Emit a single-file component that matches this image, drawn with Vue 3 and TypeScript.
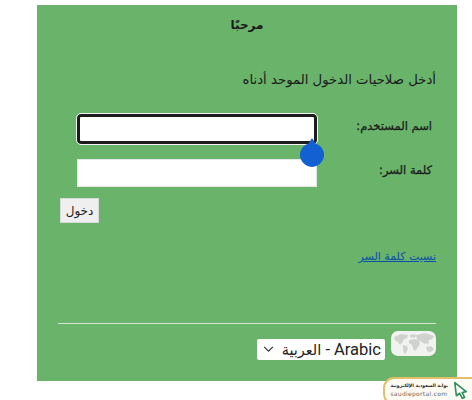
<script setup lang="ts">
const title = 'مرحبًا'
const intro = 'أدخل صلاحيات الدخول الموحد أدناه'
const fields = [
  { label: 'اسم المستخدم:', cls: 'focused' },
  { label: 'كلمة السر:', cls: 'plain' },
]
</script>

<template>
  <div class="page">
    <main class="panel" dir="rtl">
      <h1 class="title">{{ title }}</h1>
      <p class="intro">{{ intro }}</p>
      <form class="form" @submit.prevent>
        <div v-for="f in fields" :key="f.label" class="row" :class="f.cls">
          <label class="label">{{ f.label }}</label>
          <div class="box"></div>
        </div>
        <svg class="drop" viewBox="0 0 24 29" width="24" height="29">
          <path fill="#1260d2" d="M12 0l3.5 5.4A12 12 0 1 1 8.5 5.4z" />
        </svg>
      </form>
      <div class="actions"><button class="btn" type="button">دخول</button></div>
      <a class="link" href="#">نسيت كلمة السر</a>
      <hr class="rule" />
      <div class="lang">
        <div class="map">
          <svg viewBox="0 0 45 25" width="45" height="25">
            <path fill="#cfd2cf" d="M3 6l7-3 7 1-1 3-3 1-2 4-2 2-2-3-3-2zM12 14l4 1 1 3-3 5-1-1-1-4zM19 4l5-1 1 2-2 2-4-1zM18 9l6-1 4 2 1 3-4 6-2 1-2-6-3-2zM25 4l9-2 9 3-2 3-3 1-1 5-2-2-2 1-2-2-5-2zM35 16l5-1 3 3-3 3-4-1z" />
          </svg>
        </div>
        <div class="select">
          <span class="select-text">Arabic - <span class="select-ar">العربية</span></span>
          <svg class="chev" viewBox="0 0 12 8" width="11" height="7">
            <path d="M1 1l5 5 5-5" fill="none" stroke="#333" stroke-width="1.3" />
          </svg>
        </div>
      </div>
    </main>
    <aside class="badge" dir="rtl">
      <svg class="cursor" viewBox="0 0 18 22" width="15" height="18">
        <path d="M2 2l14 11-5 1 3 6-3 1-3-6-4 3z" fill="#fff" stroke="#2f8f5b" stroke-width="2" stroke-linejoin="round" />
      </svg>
      <div class="badge-text">
        <span class="b-ar">بوابة السعودية الإلكترونية</span>
        <span class="b-en" dir="ltr">saudieportal.com</span>
      </div>
    </aside>
  </div>
</template>

<style>
html, body { margin: 0; background: #fff; }
</style>

<style scoped>
.page {
  position: relative;
  width: 472px;
  height: 400px;
  padding: 5px 0 0 37px;
  box-sizing: border-box;
  overflow: hidden;
  font-family: "DejaVu Sans", sans-serif;
  color: #1a1a1a;
}
.panel {
  width: 420px;
  height: 376px;
  box-sizing: border-box;
  background: #69b36a;
  padding: 12px 21px 0;
}
.title {
  margin: 0;
  font-size: 12px;
  font-weight: 700;
  line-height: 16px;
  text-align: center;
}
.intro {
  margin: 37px 0 0;
  font-size: 13.25px;
  line-height: 20px;
}
.form {
  position: relative;
  margin-top: 24px;
  display: flex;
  flex-direction: column;
  gap: 15px;
}
.row {
  display: flex;
  align-items: center;
}
.label {
  width: 119px;
  box-sizing: border-box;
  padding: 0 4px 6px 0;
  font-size: 11.5px;
  -webkit-text-stroke: 0.25px #1a1a1a;
  white-space: nowrap;
}
.box {
  width: 240px;
  box-sizing: border-box;
  background: #fff;
}
.focused .box {
  height: 30px;
  border: 3px solid #1c1c1c;
  border-radius: 4px;
  outline: 1px solid #f4f4f4;
}
.plain .box {
  height: 28px;
  border: 1px solid #e4e8e2;
}
.drop {
  position: absolute;
  left: 242px;
  top: 24px;
}
.actions {
  margin-top: 11px;
  display: flex;
  justify-content: flex-end;
  padding-left: 2px;
}
.btn {
  width: 39px;
  height: 25px;
  padding: 0;
  border: 1px solid #d9d9d9;
  background: #efefef;
  color: #222;
  font-family: inherit;
  font-size: 12px;
}
.link {
  display: block;
  margin-top: 25px;
  font-size: 11px;
  line-height: 18px;
  color: #0b4fa8;
}
.rule {
  margin: 57px 0 0;
  border: 0;
  height: 1px;
  background: #d5e8d2;
}
.lang {
  margin-top: 7px;
  display: flex;
  align-items: flex-start;
  gap: 6px;
}
.map {
  width: 45px;
  height: 25px;
  border-radius: 7px;
  background: #f1f3f0;
}
.map svg { display: block; }
.select {
  margin-top: 8px;
  width: 128px;
  height: 21px;
  box-sizing: border-box;
  padding: 0 4px 0 6px;
  display: flex;
  align-items: center;
  justify-content: space-between;
  background: #fff;
  border-radius: 2px;
  font-family: Roboto, "DejaVu Sans", sans-serif;
  font-size: 16.5px;
  color: #222;
  white-space: nowrap;
}
.select-ar { font-size: 14.5px; }
.chev { flex: none; }
.badge {
  position: absolute;
  left: 383px;
  top: 377px;
  width: 100px;
  height: 28px;
  box-sizing: border-box;
  display: flex;
  align-items: flex-start;
  gap: 5px;
  padding: 2px 13px 0 0;
  background: #fdfbf4;
  border: 2px solid #e2bf6b;
  border-radius: 11px;
}
.cursor { flex: none; }
.badge-text {
  display: flex;
  flex-direction: column;
  margin-top: 1px;
  font-size: 4.6px;
  line-height: 8px;
  white-space: nowrap;
}
.b-ar { font-weight: 700; color: #222; }
.b-en {
  font-size: 6px;
  letter-spacing: 0.3px;
  color: #666;
}
</style>
